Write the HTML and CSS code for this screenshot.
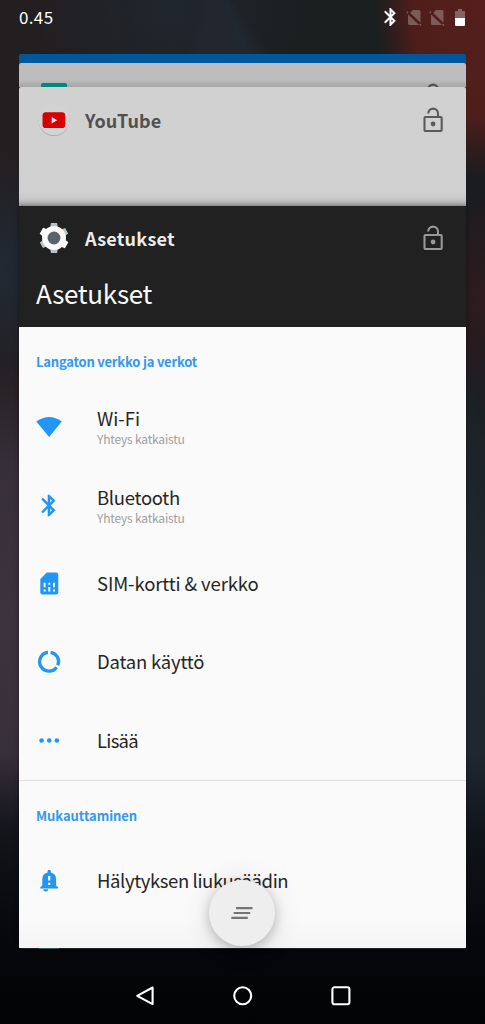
FILE: index.html
```html
<!DOCTYPE html>
<html lang="fi">
<head>
<meta charset="utf-8">
<title>Asetukset</title>
<link rel="stylesheet" href="styles.css">
</head>
<body>
<svg class="defs" width="0" height="0" aria-hidden="true">
  <symbol id="lock" viewBox="0 0 20 26">
    <rect x="1.5" y="10" width="17.2" height="14" rx="1" fill="none" stroke="currentColor" stroke-width="2.1"/>
    <circle cx="10.1" cy="17" r="2.4" fill="currentColor"/>
    <path d="M5.2 6.5A4.9 4.9 0 0 1 15 6.5V9.5" fill="none" stroke="currentColor" stroke-width="2.1"/>
  </symbol>
  <symbol id="bt" viewBox="5 2 14 20">
    <path d="M17.71 7.71 12 2h-1v7.59L6.41 5 5 6.41 10.59 12 5 17.59 6.41 19 11 14.41V22h1l5.71-5.71-4.3-4.29 4.3-4.29zM13 5.83l1.88 1.88L13 9.59V5.83zm1.88 10.46L13 18.17v-3.76l1.88 1.88z" fill="currentColor" stroke="currentColor" stroke-width=".3"/>
  </symbol>
  <symbol id="nosim" viewBox="0 0 16 17">
    <path d="M7 1H13Q14.5 1 14.5 2.5V13.6L4.2 3.9ZM2 5.4 13.2 16H3.5Q2 16 2 14.5Z" fill="currentColor"/>
    <path d="M.6 2.6 2 3.9M13.6 15 15.2 16.5" stroke="currentColor" stroke-width="1.3"/>
  </symbol>
</svg>
<div class="screen">
  <header class="status">
    <span class="clock">0.45</span>
    <div class="status-icons">
      <svg class="s-bt" width="13" height="18"><use href="#bt"/></svg>
      <svg class="s-sim" width="16" height="17"><use href="#nosim"/></svg>
      <svg class="s-sim" width="16" height="17"><use href="#nosim"/></svg>
      <svg class="s-bat" width="10" height="17" viewBox="0 0 10 17"><path d="M3 0H7V2H10V9H0V2H3Z" fill="#fff" opacity=".3"/><path d="M0 9H10V16Q10 17 9 17H1Q0 17 0 16Z" fill="#fff"/></svg>
    </div>
  </header>
  <main class="stack">
    <section class="card card-blue"></section>
    <section class="card card-mid">
      <span class="teal"></span>
      <svg class="peek" width="20" height="26"><use href="#lock"/></svg>
    </section>
    <section class="card card-yt">
      <div class="card-head">
        <svg class="app-icon" width="34" height="34" viewBox="0 0 34 34">
          <circle cx="17" cy="17.6" r="15.4" fill="#a5a5a5"/><circle cx="17" cy="16.8" r="15.5" fill="#d3d3d3"/>
          <rect x="5.5" y="9.3" width="22.8" height="15.8" rx="3.4" fill="#d50000"/><path d="M14.7 13.9V20.5L20.3 17.2Z" fill="#ddd"/>
        </svg>
        <h2 class="yt-name">YouTube</h2>
        <svg class="lock" width="20" height="26"><use href="#lock"/></svg>
      </div>
    </section>
    <section class="card card-set">
      <div class="card-head">
        <svg class="app-icon" width="34" height="34" viewBox="0 0 34 34">
          <g fill="#b7c2c7">
            <path d="M13 8 13.9 2H20.1L21 8ZM13 26 13.9 32H20.1L21 26Z"/>
            <path transform="rotate(60 17 17)" d="M13 8 13.9 2.4H20.1L21 8ZM13 26 13.9 31.6H20.1L21 26Z"/>
          </g>
          <path fill="#fafafa" transform="rotate(-60 17 17)" d="M12.6 8 13.6 2.4H20.4L21.4 8ZM12.6 26 13.6 31.6H20.4L21.4 26Z"/>
          <circle cx="17" cy="17" r="9.2" fill="#59636a" stroke="#fafafa" stroke-width="5.6"/>
        </svg>
        <h2 class="set-name">Asetukset</h2>
        <svg class="lock" width="20" height="26"><use href="#lock"/></svg>
      </div>
      <h1 class="title">Asetukset</h1>
      <div class="settings">
        <h3 class="group g1">Langaton verkko ja verkot</h3>
        <div class="row two">
          <svg width="26" height="26" viewBox="-.3 0 26 26"><path d="M0 7.5Q13-1.5 25.5 7.5L12.8 23Z" fill="#2196f3"/></svg>
          <div><p class="label l-wifi">Wi-Fi</p><p class="sub">Yhteys katkaistu</p></div>
        </div>
        <div class="row two">
          <svg width="26" height="26" viewBox="-.3 0 26 26" color="#2196f3"><use href="#bt" x="5" y="1.5" width="15.4" height="22"/></svg>
          <div><p class="label l-bt">Bluetooth</p><p class="sub">Yhteys katkaistu</p></div>
        </div>
        <div class="row">
          <svg width="26" height="26" viewBox="-.3 0 26 26"><path d="M10.5 1.5H19.7Q22 1.5 22 3.8V21.2Q22 23.5 19.7 23.5H6.3Q4 23.5 4 21.2V8Z" fill="#2196f3"/><path d="M7.3 11.8h2v4.5h-2zM7.3 18.4h2v2h-2zM12 11.8h2v2h-2zM12 15.9h2v4.5h-2zM16.7 11.8h2v4.5h-2zM16.7 18.4h2v2h-2z" fill="#fafafa"/></svg>
          <p class="label l-sim">SIM-kortti &amp; verkko</p>
        </div>
        <div class="row">
          <svg width="26" height="26" viewBox="-.3 0 26 26" fill="none" stroke="#2196f3" stroke-width="3.3"><path d="M14.3 3.3A9.4 9.4 0 0 1 21.5 16.3M20.3 18.2A9.4 9.4 0 1 1 11.7 3.3"/></svg>
          <p class="label l-data">Datan käyttö</p>
        </div>
        <div class="row">
          <svg width="26" height="26" viewBox="-.3 0 26 26" fill="#2196f3"><circle cx="5.3" cy="12.5" r="2.3"/><circle cx="12.9" cy="12.5" r="2.3"/><circle cx="20.6" cy="12.5" r="2.3"/></svg>
          <p class="label l-more">Lisää</p>
        </div>
        <h3 class="group g2">Mukauttaminen</h3>
        <div class="row">
          <svg width="26" height="26" viewBox="-.3 0 26 26"><path d="M11.2 4.5V3.4a1.7 1.7 0 0 1 3.4 0V4.5Q19.8 5.8 19.8 11V17.6L21.8 19.3V20.6H4V19.3L6 17.6V11Q6 5.8 11.2 4.5ZM7 21.2H12A2.5 2.2 0 0 1 7 21.2Z" fill="#2196f3"/><path d="M11.8 8h2.2v4.4h-2.2zM11.8 14.8h2.2v2.2h-2.2z" fill="#fafafa"/></svg>
          <p class="label l-alert">Hälytyksen liukusäädin</p>
        </div>
      </div>
      <span class="next-icon"></span>
    </section>
    <button class="clear" aria-label="Tyhjennä">
      <svg width="22" height="14" viewBox="0 0 22 14" fill="#757575"><path d="M5 1.1H21.5V3.3H5ZM2.7 5.9H19.2V8.1H2.7ZM0.3 10.7H16.8V12.9H0.3Z"/></svg>
    </button>
  </main>
  <nav class="nav">
    <svg width="20" height="20" viewBox="0 0 20 20"><path d="M17.6 1.5V18.1L2.2 9.8Z"/></svg>
    <svg width="20" height="20" viewBox="0 0 20 20"><circle cx="9.7" cy="9.8" r="8.5"/></svg>
    <svg width="20" height="20" viewBox="0 0 20 20"><rect x="1.4" y="1.3" width="17" height="17" rx="2"/></svg>
  </nav>
</div>
</body>
</html>
```

FILE: styles.css
```css
* { box-sizing: border-box; margin: 0; padding: 0; }
body { font-family: "Noto Sans CJK SC", "Noto Sans", sans-serif; }
.defs { position: absolute; }
svg { display: block; flex: none; }

.screen {
  width: 485px;
  height: 1024px;
  overflow: hidden;
  display: flex;
  flex-direction: column;
  /* dim wallpaper: red glow top right, violet band on the left, near black at the bottom */
  background:
    linear-gradient(to top, #020304 0, #05070a 80px, rgba(10, 14, 20, .75) 190px, rgba(12, 16, 22, 0) 270px),
    radial-gradient(ellipse 112px 180px at 485px 0, #551f1c 0, #4e1e1b 66%, rgba(60, 28, 27, .6) 84%, rgba(36, 28, 30, 0) 100%),
    radial-gradient(ellipse 60px 110px at 485px 300px, rgba(62, 26, 29, .6) 0, rgba(50, 26, 29, 0) 100%),
    radial-gradient(ellipse 90px 260px at 0 620px, #3d333e 0, #362e39 60%, rgba(35, 32, 40, 0) 100%),
    radial-gradient(ellipse 60px 120px at 0 270px, #202a35 0, rgba(32, 40, 50, 0) 100%),
    conic-gradient(from 145deg at 212px -30px, rgba(32, 42, 48, 0) 0, #1f292f 12deg, #22262f 24deg, #22262f 44deg, rgba(30, 36, 44, 0) 52deg, rgba(30, 36, 44, 0) 360deg),
    radial-gradient(ellipse 130px 130px at 170px 10px, #20262d 0, rgba(32, 38, 45, 0) 100%),
    linear-gradient(to right, #241e20 0, #1e2023 35%, #1a1f20 60%, #1a1f20 80%, #1a1c20 100%);
}

.status {
  height: 54px;
  padding: 9px 20px 0 19px;
  display: flex;
  justify-content: space-between;
  color: #fff;
}
.clock { font: 17px/17px "Noto Sans CJK SC", sans-serif; letter-spacing: .35px; margin-top: -1px; }
.status-icons { display: flex; }
.s-bt { margin: -1px 9px 0 0; }
.s-sim { color: rgba(255, 255, 255, .27); margin-right: 7px; }
.s-bat { margin-left: 3px; }

.stack {
  position: relative;
  width: 447px;
  height: 895px;
  margin-left: 19px;
  display: flex;
  flex-direction: column;
  flex: none;
}
.card { border-radius: 2px 2px 0 0; flex: none; }
.card-blue { height: 9px; background: #01579b; }
.card-mid {
  height: 24px;
  padding: 20px 23px 0 22px;
  display: flex;
  justify-content: space-between;
  overflow: hidden;
  background: linear-gradient(#bdbdbd 70%, #a6a6a6);
}
.teal { width: 26px; height: 8px; border-radius: 2px; background: #00897f; }
.peek { color: #505050; }
.card-yt { height: 119px; background: linear-gradient(#d1d1d1 87%, #c8c8c8 94%, #a2a2a2); }
.card-head { display: flex; align-items: center; height: 66px; padding: 0 23px 0 18px; }
.card-head h2 { font-size: 18px; line-height: 26px; font-weight: 700; margin-left: 14px; flex: 1; }
.lock { color: #5a5a5a; }
.card-yt .yt-name { color: #505050; letter-spacing: .1px; }
.card-set {
  height: 743px;
  background: #212121;
  overflow: hidden;
  border-radius: 2px;
  display: flex;
  flex-direction: column;
  box-shadow: 0 0 4px rgba(0, 0, 0, .35);
}
.card-set .card-head { height: 64px; }
.card-set .set-name { color: #ececec; letter-spacing: .25px; }
.card-set .lock { color: #989898; }
.title { color: #fafafa; font-size: 26px; line-height: 38px; font-weight: 400; letter-spacing: -.3px; height: 57px; padding: 4px 0 0 17px; }
.settings { height: 621px; flex: none; background: linear-gradient(#fafafa 95%, #f4f4f4); }
.group { color: #3399ec; font-size: 13px; font-weight: 700; line-height: 20px; padding-left: 17px; }
.g1 { height: 61px; padding-top: 25px; letter-spacing: -.2px; }
.g2 { height: 62px; padding-top: 25px; border-top: 1px solid #e0e0e0; letter-spacing: -.05px; }
.row { height: 78.4px; display: flex; align-items: center; gap: 35px; padding-left: 17px; }
.label { color: #262626; font-size: 18.5px; line-height: 24px; white-space: nowrap; }
.row > .label { margin-top: -2px; }
.two .label { line-height: 23px; }
.l-bt { letter-spacing: -.3px; }
.l-sim { letter-spacing: -.12px; }
.l-data { letter-spacing: -.2px; }
.l-more { letter-spacing: -.75px; }
.l-alert { letter-spacing: -.4px; }
.sub { color: #9e9e9e; font-size: 12px; line-height: 17px; letter-spacing: -.18px; }
.next-icon { width: 20px; height: 1px; margin-left: 20px; background: #3a555a; }

.clear {
  position: absolute;
  left: 190px;
  top: 826px;
  width: 66px;
  height: 66px;
  border: 0;
  border-radius: 50%;
  background: #eee;
  box-shadow: 0 3px 12px rgba(0, 0, 0, .22), 0 2px 30px rgba(0, 0, 0, .12);
  display: grid;
  place-items: center;
}
.nav { flex: 1; display: flex; justify-content: center; gap: 78px; padding-top: 37px; }
.nav svg { fill: none; stroke: #fff; stroke-width: 2.1; stroke-linejoin: round; }
```
